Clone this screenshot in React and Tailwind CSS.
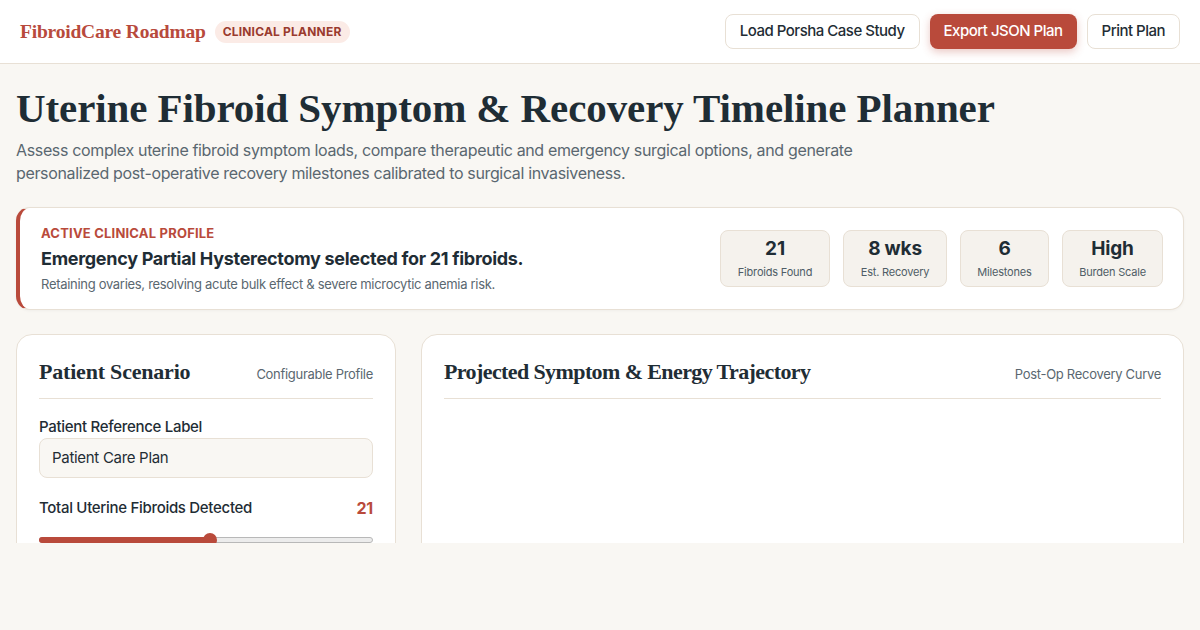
import React from "react";

const serif = { fontFamily: '"Liberation Serif", "DejaVu Serif", serif' };

function Stat({ value, label, w }) {
  return (
    <div className={`flex flex-col items-center justify-center h-[57px] rounded-lg border border-[#e8e0d5] bg-[#f5f2ed] ${w}`}>
      <div className="text-[19px] font-bold leading-6 text-[#1f2d35]">{value}</div>
      <div className="mt-[3px] text-[11px] leading-4 text-[#4f5d66]">{label}</div>
    </div>
  );
}

export default function App() {
  return (
    <div className="min-h-screen bg-[#f9f7f3] text-[#1f2d35] tracking-[-0.2px]" style={{ fontFamily: 'Inter, "Open Sans", sans-serif' }}>
      <div className="h-[543px] overflow-hidden">
        <header className="flex h-[64px] items-center justify-between border-b border-[#e8e0d5] bg-white pl-5 pr-5">
          <div className="flex items-center gap-[9px]">
            <div className="text-[19.5px] font-bold text-[#b84a3c] tracking-[-0.2px]" style={serif}>FibroidCare Roadmap</div>
            <div className="flex h-[22px] items-center rounded-full bg-[#fbebe6] px-2 text-[12px] font-bold tracking-[0.2px] text-[#9a3a2e]">CLINICAL PLANNER</div>
          </div>
          <div className="flex items-center gap-[10px]">
            <button className="h-[35px] rounded-lg border border-[#e8e0d5] bg-white px-[14px] text-[15px] font-medium tracking-[-0.5px] text-[#1f2d35]">Load Porsha Case Study</button>
            <button className="h-[35px] rounded-lg bg-[#b94a3b] px-[14px] text-[15px] font-medium tracking-[-0.5px] text-white shadow-[0_3px_8px_rgba(185,74,59,0.3)]">Export JSON Plan</button>
            <button className="h-[35px] rounded-lg border border-[#e8e0d5] bg-white px-[14px] text-[15px] font-medium tracking-[-0.5px] text-[#1f2d35]">Print Plan</button>
          </div>
        </header>

        <main className="px-4 pt-[20px]">
          <h1 className="text-[41px] font-bold leading-[48px] tracking-[-0.1px] text-[#1f2d35]" style={serif}>Uterine Fibroid Symptom &amp; Recovery Timeline Planner</h1>
          <p className="mt-[7px] max-w-[880px] text-[16px] leading-[23px] tracking-[-0.35px] text-[#5a6770]">
            Assess complex uterine fibroid symptom loads, compare therapeutic and emergency surgical options, and generate personalized post-operative recovery milestones calibrated to surgical invasiveness.
          </p>

          <section className="mt-[22px] flex h-[103px] items-center justify-between rounded-[14px] border border-[#e8e0d5] border-l-4 border-l-[#b94a3b] bg-white pl-[21px] pr-5 shadow-[0_1px_3px_rgba(0,0,0,0.04)]">
            <div>
              <div className="text-[13px] font-bold tracking-[0.2px] leading-4 text-[#b94a3b]">ACTIVE CLINICAL PROFILE</div>
              <div className="mt-[6px] text-[18px] font-bold leading-6 tracking-[-0.3px] text-[#1f2d35]">Emergency Partial Hysterectomy selected for 21 fibroids.</div>
              <div className="mt-[5px] text-[13px] leading-4 tracking-[-0.3px] text-[#5a6770]">Retaining ovaries, resolving acute bulk effect &amp; severe microcytic anemia risk.</div>
            </div>
            <div className="flex gap-[13px]">
              <Stat value="21" label="Fibroids Found" w="w-[110px]" />
              <Stat value="8 wks" label="Est. Recovery" w="w-[104px]" />
              <Stat value="6" label="Milestones" w="w-[89px]" />
              <Stat value="High" label="Burden Scale" w="w-[101px]" />
            </div>
          </section>

          <div className="mt-[24px] flex gap-[25px]">
            <section className="h-[300px] w-[380px] shrink-0 rounded-2xl border border-[#e8e0d5] bg-white px-[22px] pt-[23px]">
              <div className="flex items-end justify-between border-b border-[#e8e0d5] pb-[12px]">
                <h2 className="text-[22px] font-bold leading-7 tracking-[-0.2px] text-[#1f2d35]" style={serif}>Patient Scenario</h2>
                <span className="pb-[2px] text-[13px] tracking-[-0.3px] text-[#5a6770]">Configurable Profile</span>
              </div>
              <label className="mt-[18px] block text-[15px] font-medium leading-5 tracking-[-0.3px] text-[#1f2d35]">Patient Reference Label</label>
              <div className="mt-[1px] flex h-[40px] items-center rounded-lg border border-[#e8e0d5] bg-[#f9f7f3] px-3 text-[15px] tracking-[-0.3px] text-[#1f2d35]">Patient Care Plan</div>
              <div className="mt-[18px] flex items-center justify-between">
                <span className="text-[15px] font-medium leading-5 tracking-[-0.3px] text-[#1f2d35]">Total Uterine Fibroids Detected</span>
                <span className="text-[16px] font-bold text-[#b94a3b]">21</span>
              </div>
              <div className="relative mt-[17px] h-[6px] rounded-full border border-[#b8b8b8] bg-[#ececec]">
                <div className="absolute left-[-1px] top-[-1px] h-[6px] w-[171px] rounded-full bg-[#b94a3b]" />
                <div className="absolute left-[163px] top-[-5px] h-[14px] w-[14px] rounded-full bg-[#b94a3b]" />
              </div>
            </section>

            <section className="h-[300px] flex-1 rounded-2xl border border-[#e8e0d5] bg-white px-[22px] pt-[23px]">
              <div className="flex items-end justify-between border-b border-[#e8e0d5] pb-[12px]">
                <h2 className="text-[22px] font-bold leading-7 tracking-[-0.6px] text-[#1f2d35]" style={serif}>Projected Symptom &amp; Energy Trajectory</h2>
                <span className="pb-[2px] text-[13px] tracking-[-0.3px] text-[#5a6770]">Post-Op Recovery Curve</span>
              </div>
            </section>
          </div>
        </main>
      </div>
    </div>
  );
}
